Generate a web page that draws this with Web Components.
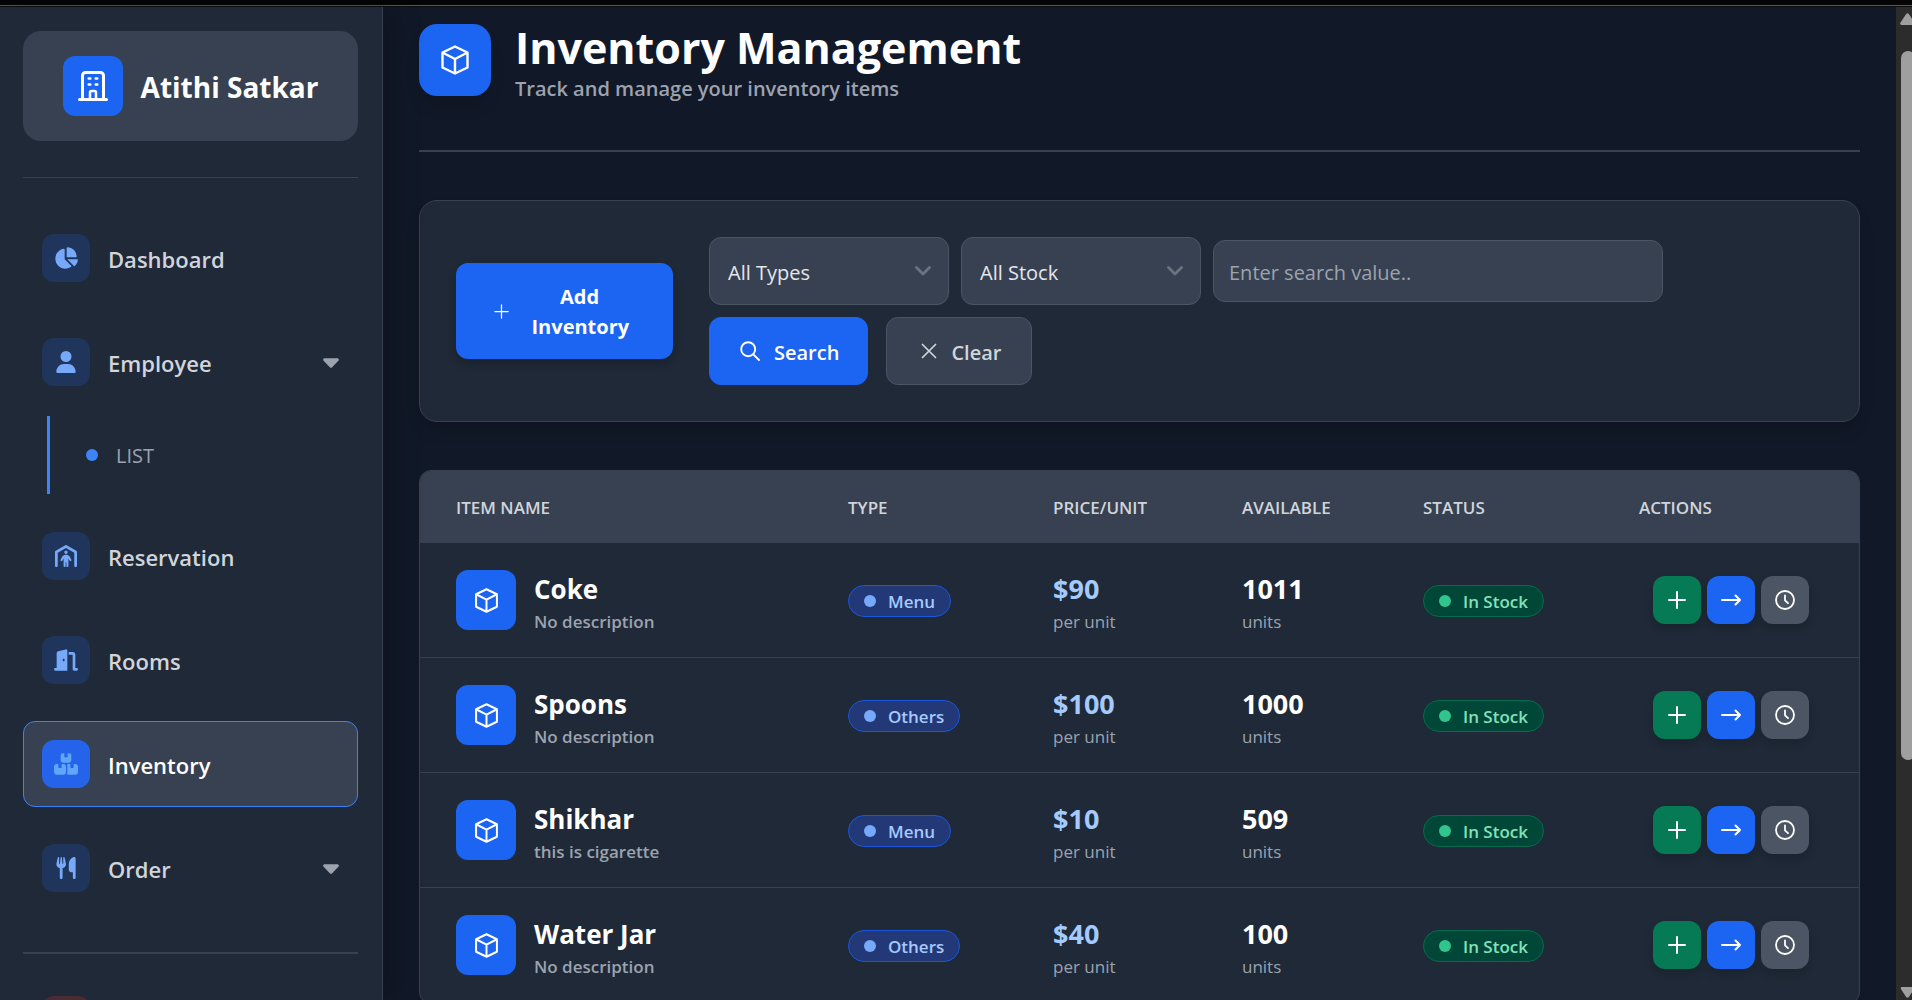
<!DOCTYPE html>
<html lang="en">
<head>
<meta charset="utf-8">
<title>Inventory Management</title>
<style>
  :root {
    --g900: #111827; --g800: #1f2937; --g700: #374151; --g600: #4b5563;
    --g500: #6b7280; --g400: #9ca3af; --g300: #d1d5db;
    --blue: #1c64f2; --blue5: #3f83f8; --blue4: #76a9fa; --blue3: #a4cafe;
    --green: #057a55;
  }
  body { margin: 0; background: var(--g900); font-family: "Open Sans", "Noto Sans", sans-serif; font-size: 20px; color: #fff; }
</style>
</head>
<body>
<app-shell>
  <side-bar slot="side">
    <nav-item icon="pie">Dashboard</nav-item>
    <nav-group>
      <nav-item icon="user" expandable>Employee</nav-item>
      <nav-sub slot="sub">LIST</nav-sub>
    </nav-group>
    <nav-item icon="shelter">Reservation</nav-item>
    <nav-item icon="door">Rooms</nav-item>
    <nav-item icon="boxes" active>Inventory</nav-item>
    <nav-item icon="utensils" expandable>Order</nav-item>
    <nav-item slot="foot" danger></nav-item>
  </side-bar>
  <page-header>
    Inventory Management
    <span slot="sub">Track and manage your inventory items</span>
  </page-header>
  <filter-panel></filter-panel>
  <inventory-table></inventory-table>
</app-shell>

<script>
const ICONS = {
  pie: ['0 0 576 512', '<path d="M304 240V16.600c0-9 7-16.600 16-16.600C443.700 0 544 100.300 544 224c0 9-7.600 16-16.600 16H304zM32 272C32 150.700 122.100 50.300 239 34.300c9.200-1.300 17 6.100 17 15.400V288L412.500 444.500c6.700 6.700 6.200 17.700-1.500 23.100C371.800 495.600 323.800 512 272 512C139.500 512 32 404.600 32 272zm526.400 16c9.300 0 16.600 7.800 15.400 17c-7.700 55.900-34.600 105.600-73.900 142.300c-6 5.600-15.400 5.200-21.200-.7L320 288H558.400z"/>'],
  user: ['0 0 448 512', '<path d="M224 256A128 128 0 1 0 224 0a128 128 0 1 0 0 256zm-45.700 48C79.800 304 0 383.800 0 482.300C0 498.700 13.300 512 29.700 512H418.300c16.400 0 29.700-13.300 29.700-29.700C448 383.800 368.200 304 269.700 304H178.300z"/>'],
  shelter: ['0 0 512 512', '<path d="M271.900 4.200c-9.800-5.600-21.900-5.600-31.800 0l-224 128C6.200 137.900 0 148.500 0 160V480c0 17.700 14.300 32 32 32s32-14.300 32-32V178.600L256 68.900 448 178.600V480c0 17.700 14.300 32 32 32s32-14.300 32-32V160c0-11.500-6.200-22.100-16.100-27.800l-224-128zM256 208a40 40 0 1 0 0-80 40 40 0 1 0 0 80zm-8 280V400h16v88c0 13.300 10.700 24 24 24s24-10.700 24-24V313.500l26.900 49.900c6.300 11.700 20.800 16 32.500 9.800s16-20.800 9.800-32.500l-37.900-70.300c-15.300-28.500-45.100-46.300-77.500-46.300H246.200c-32.400 0-62.100 17.800-77.500 46.300l-37.900 70.300c-6.300 11.700-1.900 26.200 9.800 32.500s26.200 1.900 32.500-9.800L200 313.500V488c0 13.300 10.700 24 24 24s24-10.700 24-24z"/>'],
  door: ['0 0 576 512', '<path d="M320 32c0-9.900-4.500-19.200-12.300-25.200S289.800-1.400 280.200 1l-179.900 45C79 51.300 64 70.500 64 92.500V448H32c-17.700 0-32 14.300-32 32s14.300 32 32 32H320V32zM256 256c0 17.700-10.700 32-24 32s-24-14.300-24-32s10.700-32 24-32s24 14.300 24 32zm96-128h96V480c0 17.700 14.300 32 32 32h64c17.700 0 32-14.300 32-32s-14.300-32-32-32H512V128c0-35.300-28.700-64-64-64H352v64z"/>'],
  boxes: ['0 0 576 512', '<path d="M248 0H208c-26.500 0-48 21.500-48 48V160c0 35.300 28.700 64 64 64H352c35.300 0 64-28.700 64-64V48c0-26.500-21.500-48-48-48H328V80c0 8.800-7.200 16-16 16H264c-8.800 0-16-7.200-16-16V0zM64 256c-35.300 0-64 28.700-64 64V448c0 35.300 28.700 64 64 64H224c35.300 0 64-28.700 64-64V320c0-35.300-28.700-64-64-64H184v80c0 8.800-7.200 16-16 16H120c-8.800 0-16-7.200-16-16V256H64zM352 512H512c35.300 0 64-28.700 64-64V320c0-35.300-28.700-64-64-64H472v80c0 8.800-7.200 16-16 16H408c-8.800 0-16-7.200-16-16V256H352c-15 0-28.800 5.100-39.700 13.800c4.900 10.400 7.700 22 7.700 34.200V464c0 12.200-2.800 23.800-7.700 34.200C323.200 506.900 337 512 352 512z"/>'],
  utensils: ['0 0 448 512', '<path d="M416 0C400 0 288 32 288 176V288c0 35.300 28.700 64 64 64h32V480c0 17.700 14.300 32 32 32s32-14.300 32-32V352 240 32c0-17.700-14.300-32-32-32zM64 16C64 7.800 57.900 1 49.700 .1S34.200 4.600 32.400 12.500L2.100 148.800C.7 155.100 0 161.500 0 167.900c0 45.900 35.100 83.600 80 87.700V480c0 17.700 14.300 32 32 32s32-14.300 32-32V255.600c44.900-4.100 80-41.800 80-87.700c0-6.400-.7-12.800-2.100-19.100L191.600 12.500c-1.800-8-9.300-13.300-17.400-12.400S160 7.800 160 16V150.200c0 5.400-4.400 9.800-9.800 9.800c-5.100 0-9.300-3.900-9.800-9L127.900 14.600C127.200 6.300 120.300 0 112 0s-15.200 6.300-15.900 14.600L83.700 151c-.5 5.100-4.700 9-9.800 9c-5.400 0-9.800-4.400-9.800-9.800V16z"/>'],
  building: ['0 0 30 30', '<g fill="none" stroke="currentColor" stroke-width="3" stroke-linecap="round" stroke-linejoin="round"><path d="M4.500 28V4.500a3 3 0 0 1 3-3h15a3 3 0 0 1 3 3V28M1.500 28.500h27"/><path stroke-width="2.500" d="M12 28v-6.500a1.500 1.500 0 0 1 1.500-1.500h3a1.500 1.500 0 0 1 1.500 1.500V28M10.700 7.500h1.600M17.700 7.500h1.600M10.700 13.500h1.600M17.700 13.500h1.600"/></g>'],
  cube: ['0 0 30 30', '<path fill="none" stroke="currentColor" stroke-width="2.400" stroke-linejoin="round" d="M15 1.500 27.500 7.500V22.500L15 28.500 2.500 22.500V7.500zM2.500 7.500 15 14 27.500 7.500M15 14V28.500"/>'],
  caret: ['0 0 16 10', '<path d="M1.800.2h12.400c1.500 0 2.200 1.500 1.200 2.600L9.200 9.200c-.7.700-1.700.7-2.400 0L.6 2.800C-.4 1.700.3.200 1.800.2z"/>'],
  chevron: ['0 0 16 10', '<path fill="none" stroke="currentColor" stroke-width="2.800" stroke-linecap="round" stroke-linejoin="round" d="M1.500 1.500 8 8l6.500-6.500"/>'],
  plus: ['0 0 18 18', '<path fill="none" stroke="currentColor" stroke-width="var(--sw,2)" stroke-linecap="round" d="M9 1V17M1 9H17"/>'],
  arrow: ['0 0 20 20', '<path fill="none" stroke="currentColor" stroke-width="2" stroke-linecap="round" stroke-linejoin="round" d="M1 10H19M14.500 5.500 19 10 14.500 14.500"/>'],
  clock: ['0 0 20 20', '<g fill="none" stroke="currentColor" stroke-width="1.800" stroke-linecap="round" stroke-linejoin="round"><circle cx="10" cy="10" r="9"/><path d="M10 5.500V10.300L13 13.200"/></g>'],
  search: ['0 0 20 20', '<g fill="none" stroke="currentColor" stroke-width="1.900" stroke-linecap="round"><circle cx="8.200" cy="8.200" r="7"/><path d="M13.300 13.300 19 19"/></g>'],
  close: ['0 0 16 16', '<path fill="none" stroke="currentColor" stroke-width="1.700" stroke-linecap="round" d="M1.500 1.500 14.500 14.500M14.500 1.500 1.500 14.500"/>'],
  none: ['0 0 1 1', '']
};

function define(name, render) {
  customElements.define(name, class extends HTMLElement {
    constructor() { super(); this.attachShadow({ mode: 'open' }); }
    connectedCallback() { this.shadowRoot.innerHTML = render(this); }
  });
}

define('ui-icon', el => {
  const [box, body] = ICONS[el.getAttribute('name')] || ICONS.none;
  const w = el.getAttribute('w') || 24, h = el.getAttribute('h') || w;
  return `<style>:host{display:block;flex:none}svg{display:block;fill:currentColor}</style>
    <svg width="${w}" height="${h}" viewBox="${box}" aria-hidden="true">${body}</svg>`;
});

define('icon-tile', el => `
  <style>
    :host{display:flex;flex:none;align-items:center;justify-content:center;width:60px;height:60px;border-radius:12px;background:var(--blue);color:#fff}
    :host([large]){width:72px;height:72px;border-radius:18px;box-shadow:0 12px 18px -4px rgba(0,0,0,.15)}
  </style>
  <ui-icon name="${el.getAttribute('icon')}" w="${el.getAttribute('size')}"></ui-icon>`);

define('app-shell', () => `
  <style>
    :host{display:flex;flex-direction:column;height:100vh;overflow:hidden}
    .edge{flex:none;height:5px;background:#050505;border-bottom:1px solid #5a5853;box-shadow:0 1px 0 #0a0c10;margin-bottom:1px}
    .row{display:flex;flex:1;min-height:0}
    main{flex:1;min-width:0;overflow:hidden;padding:17px 36px 0;box-sizing:border-box}
    ::slotted([slot=side]){position:relative;z-index:1}
  </style>
  <div class="edge"></div>
  <div class="row">
    <slot name="side"></slot>
    <main><slot></slot></main>
    <scroll-rail></scroll-rail>
  </div>`);

define('scroll-rail', () => `
  <style>
    :host{display:flex;flex:none;flex-direction:column;box-sizing:border-box;width:16px;padding:6px 0 2px 4px;background:#2c2c2c;overflow:hidden;color:#9f9f9f}
    .thumb{flex:25;width:14px;margin:26px 0 0 1px;border-radius:7px;background:#9f9f9f}
    .rest{flex:8}
    svg{flex:none;display:block;fill:currentColor}
  </style>
  <svg width="15" height="12" viewBox="0 0 15 12"><path d="M6 1.200a2 2 0 0 1 3 0l5.500 8.300c.8 1.200.2 2.500-1 2.500h-12C.3 12-.3 10.700.5 9.500z"/></svg>
  <div class="thumb"></div>
  <div class="rest"></div>
  <svg width="15" height="11" viewBox="0 0 15 12"><path d="M6 10.800a2 2 0 0 0 3 0l5.500-8.300c.8-1.200.2-2.500-1-2.500h-12C.3 0-.3 1.300.5 2.500z"/></svg>`);

define('side-bar', () => `
  <style>
    :host{display:flex;flex:none;flex-direction:column;box-sizing:border-box;width:383px;padding:24px 24px 0 23px;overflow:hidden;background:var(--g800);border-right:1px solid var(--g700);box-shadow:6px 0 30px rgba(0,0,0,.25)}
    .brand{display:flex;flex:none;align-items:center;justify-content:center;gap:18px;height:110px;border-radius:18px;background:var(--g700);font-size:28px;font-weight:700}
    .brand span{padding-top:2px}
    nav,.foot{display:flex;flex:none;flex-direction:column;gap:18px}
    nav{margin-top:36px;padding:37px 0 41px;border-top:1px solid var(--g700)}
    .foot{border-top:2px solid var(--g700);padding-top:23px}
  </style>
  <div class="brand"><icon-tile icon="building" size="30"></icon-tile><span>Atithi Satkar</span></div>
  <nav><slot></slot></nav>
  <div class="foot"><slot name="foot"></slot></div>`);

define('nav-group', () => `
  <style>:host{display:flex;flex-direction:column;gap:11px;padding-bottom:1px}</style>
  <slot></slot><slot name="sub"></slot>`);

define('nav-item', el => `
  <style>
    :host{display:block}
    a{display:flex;align-items:center;gap:18px;padding:18px;border:1px solid transparent;border-radius:12px;color:var(--g300);font-size:22px;line-height:30px;font-weight:600;text-decoration:none}
    .tile{display:flex;flex:none;align-items:center;justify-content:center;width:48px;height:48px;border-radius:12px;background:#20355b;color:var(--blue4)}
    .label{flex:1;padding-top:2px}
    .caret{padding-top:2px;color:var(--g400)}
    :host([active]) a{background:var(--g700);border-color:#3b82f6;color:#fff}
    :host([active]) .tile{background:#2563eb;color:#60a5fa}
    :host([danger]) .tile{background:#4a2a33;color:#f98080}
  </style>
  <a href="#">
    <span class="tile"><ui-icon name="${el.getAttribute('icon')}" w="24" h="22"></ui-icon></span>
    <span class="label"><slot></slot></span>
    ${el.hasAttribute('expandable') ? '<ui-icon class="caret" name="caret" w="16" h="10"></ui-icon>' : ''}
  </a>`);

define('nav-sub', () => `
  <style>
    :host{display:block;margin-left:24px;border-left:3px solid var(--blue5)}
    a{display:flex;align-items:center;gap:18px;height:78px;padding-left:36px;color:var(--g400);font-size:20px;text-decoration:none}
    i{width:12px;height:12px;border-radius:50%;background:var(--blue5)}
  </style>
  <a href="#"><i></i><slot></slot></a>`);

define('page-header', () => `
  <style>
    :host{display:flex;align-items:flex-start;gap:24px;padding-bottom:44px;border-bottom:2px solid var(--g700)}
    h1{margin:0;font-size:43px;line-height:48px;font-weight:700}
    p{margin:0;font-size:20px;line-height:34px;font-weight:600;color:var(--g400)}
  </style>
  <icon-tile large icon="cube" size="30"></icon-tile>
  <div><h1><slot></slot></h1><p><slot name="sub"></slot></p></div>`);

define('pick-list', el => `
  <style>
    :host{display:grid;width:240px;align-items:center}
    select,ui-icon{grid-area:1/1}
    select{appearance:none;width:100%;height:68px;box-sizing:border-box;padding:2px 40px 0 18px;border:1px solid var(--g600);border-radius:12px;background:var(--g700);color:#e5e7eb;font:inherit}
    ui-icon{justify-self:end;margin-right:18px;color:var(--g500);pointer-events:none}
  </style>
  <select aria-label="${el.getAttribute('label')}"><option>${el.textContent}</option></select>
  <ui-icon name="chevron" w="16" h="10"></ui-icon>`);

define('push-button', el => `
  <style>
    :host{display:block}
    button{display:flex;align-items:center;justify-content:center;gap:14px;height:68px;box-sizing:border-box;padding:0 28px 0 30px;border:1px solid var(--blue);border-radius:12px;background:var(--blue);color:#fff;font:inherit;font-size:20px;font-weight:600}
    span{padding-top:2px}
    :host([muted]) button{background:var(--g700);border-color:var(--g600);color:var(--g300);padding:0 30px 0 34px}
  </style>
  <button type="button"><ui-icon name="${el.getAttribute('icon')}" w="${el.getAttribute('size')}"></ui-icon><span><slot></slot></span></button>`);

define('filter-panel', () => `
  <style>
    :host{display:flex;align-items:center;gap:36px;margin:48px 0;padding:36px;border:1px solid var(--g700);border-radius:18px;background:var(--g800);box-shadow:0 10px 18px -6px rgba(0,0,0,.25)}
    .add{display:flex;flex:none;align-items:center;justify-content:center;gap:23px;width:217px;height:96px;padding:0 8px 0 0;border:0;border-radius:12px;background:var(--blue);color:#fff;font:inherit;font-size:20px;line-height:30px;font-weight:700;box-shadow:0 5px 8px rgba(0,0,0,.2);--sw:1.500}
    .add span{width:96px;padding-top:2px}
    .controls{display:flex;flex:1;flex-direction:column;gap:12px}
    .line{display:flex;align-items:center;gap:12px}
    .line.wide{gap:18px}
    input{width:450px;height:62px;box-sizing:border-box;padding:2px 15px 0;border:1px solid var(--g600);border-radius:12px;background:var(--g700);color:#fff;font:inherit;outline:0}
    input::placeholder{color:var(--g400);opacity:1}
  </style>
  <button class="add" type="button"><ui-icon name="plus" w="15"></ui-icon><span>Add Inventory</span></button>
  <div class="controls">
    <div class="line">
      <pick-list label="Type">All Types</pick-list>
      <pick-list label="Stock">All Stock</pick-list>
      <input type="text" aria-label="Search value" placeholder="Enter search value..">
    </div>
    <div class="line wide">
      <push-button icon="search" size="20">Search</push-button>
      <push-button icon="close" size="16" muted>Clear</push-button>
    </div>
  </div>`);

define('tag-pill', () => `
  <style>
    :host{display:inline-flex;align-items:center;gap:12px;height:32px;box-sizing:border-box;padding:0 15px;border:1px solid #1a56db;border-radius:16px;background:#233876;color:var(--blue3);font-size:17px;font-weight:600;vertical-align:middle;white-space:nowrap}
    i{width:12px;height:12px;border-radius:50%;background:var(--blue4)}
    :host([kind=stock]){background:#014737;border-color:#046c4e;color:#84e1bc}
    :host([kind=stock]) i{background:#31c48d}
  </style>
  <i></i><slot></slot>`);

define('action-button', el => `
  <style>
    :host{display:block}
    button{display:flex;align-items:center;justify-content:center;width:48px;height:48px;padding:0;border:0;border-radius:12px;background:var(--tone);color:#fff;box-shadow:0 5px 8px rgba(0,0,0,.14)}
  </style>
  <button type="button" aria-label="${el.getAttribute('label')}"><ui-icon name="${el.getAttribute('icon')}" w="${el.getAttribute('size')}"></ui-icon></button>`);

define('inventory-table', () => {
  const rows = [
    ['Coke', 'No description', 'Menu', '$90', '1011'],
    ['Spoons', 'No description', 'Others', '$100', '1000'],
    ['Shikhar', 'this is cigarette', 'Menu', '$10', '509'],
    ['Water Jar', 'No description', 'Others', '$40', '100']
  ];
  return `
  <style>
    :host{display:block;border:1px solid var(--g700);border-radius:12px;overflow:hidden;background:var(--g800)}
    table{width:100%;table-layout:fixed;border-collapse:separate;border-spacing:0}
    col:nth-child(1){width:27.240%}col:nth-child(2){width:14.250%}col:nth-child(3){width:13.130%}
    col:nth-child(4){width:12.580%}col:nth-child(5){width:15.010%}
    th{height:70px;padding:2px 36px 0;background:var(--g700);color:var(--g300);font-size:17px;line-height:24px;font-weight:600;text-align:left}
    td{height:114px;padding:0 36px;border-bottom:1px solid var(--g700);vertical-align:middle}
    .tag{height:112px;padding-top:2px}
    .item{display:flex;align-items:center;gap:18px}
    .stack{padding-top:8px}
    b,small{display:block}
    b{font-size:26px;line-height:36px;font-weight:700}
    .figure b{font-size:27px}
    small{font-size:17px;line-height:30px;color:var(--g400)}
    .item small{font-weight:600}
    .price{color:var(--blue3)}
    .actions{display:flex;justify-content:center;gap:6px}
  </style>
  <table>
    <colgroup><col><col><col><col><col><col></colgroup>
    <thead><tr><th>ITEM NAME</th><th>TYPE</th><th>PRICE/UNIT</th><th>AVAILABLE</th><th>STATUS</th><th>ACTIONS</th></tr></thead>
    <tbody>${rows.map(([name, desc, type, price, qty]) => `
      <tr>
        <td><div class="item"><icon-tile icon="cube" size="25"></icon-tile><div class="stack"><b>${name}</b><small>${desc}</small></div></div></td>
        <td class="tag"><tag-pill>${type}</tag-pill></td>
        <td><div class="stack figure"><b class="price">${price}</b><small>per unit</small></div></td>
        <td><div class="stack figure"><b>${qty}</b><small>units</small></div></td>
        <td class="tag"><tag-pill kind="stock">In Stock</tag-pill></td>
        <td><div class="actions">
          <action-button icon="plus" size="18" label="Add stock" style="--tone:var(--green)"></action-button>
          <action-button icon="arrow" size="20" label="Move stock" style="--tone:var(--blue)"></action-button>
          <action-button icon="clock" size="20" label="History" style="--tone:var(--g600)"></action-button>
        </div></td>
      </tr>`).join('')}
    </tbody>
  </table>`;
});
</script>
</body>
</html>
